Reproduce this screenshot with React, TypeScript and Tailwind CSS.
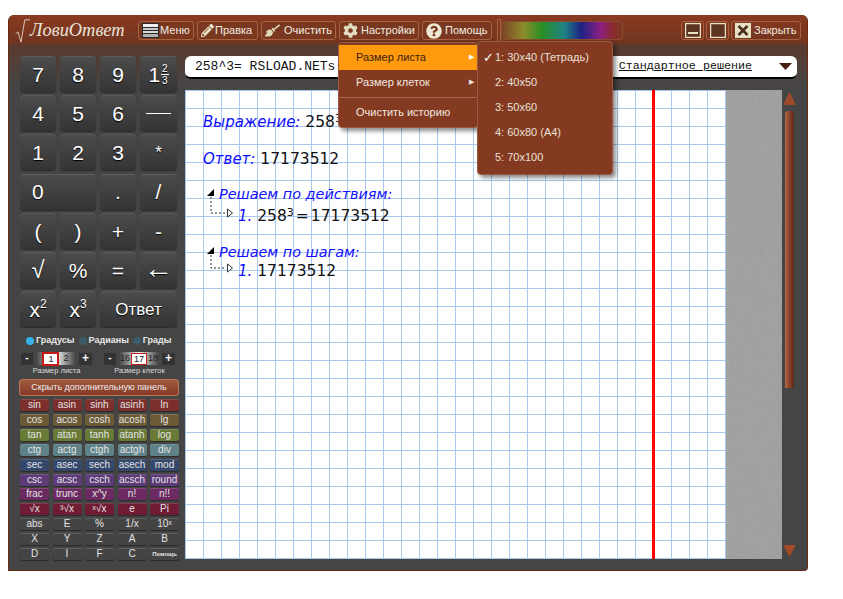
import { FaBroom, FaCog, FaPencilAlt, FaQuestionCircle } from "react-icons/fa";
import type { ReactNode } from "react";

const sans = "font-['Liberation_Sans',Arial,sans-serif]";

function ToolButton({ icon, label, width, iconWidth }: { icon: ReactNode; label: string; width: string; iconWidth: string }) {
  return (
    <div className={`${width} h-[19px] flex items-center pl-[3px] border border-[#a8623f] rounded-[3px] bg-[#7a3820] text-[11px] text-[#f0ebe0]`}>
      <span className={`${iconWidth} h-[16px] flex items-center justify-start shrink-0`}>{icon}</span>
      <span>{label}</span>
    </div>
  );
}

function MenuIcon() {
  return (
    <svg width="17" height="15" viewBox="0 0 17 15">
      <rect width="17" height="15" fill="#2a2a2a" />
      <rect x="1" y="1" width="15" height="3" fill="#f0f0f0" />
      <rect x="1" y="5" width="15" height="2" fill="#c8c8c8" />
      <rect x="1" y="8" width="15" height="2" fill="#d8d8d8" />
      <rect x="1" y="11" width="15" height="3" fill="#b0b0b0" />
    </svg>
  );
}

function WindowIcon({ kind }: { kind: "min" | "max" | "close" }) {
  return (
    <svg width="16" height="15" viewBox="0 0 16 15">
      <rect x="0.5" y="0.5" width="15" height="14" fill={kind === "close" ? "#e8e2c4" : "#5d3322"} stroke="#e8e2c4" strokeWidth="1.5" />
      {kind === "min" && <rect x="3" y="9" width="10" height="2" fill="#e8e2c4" />}
      {kind === "close" && <path d="M3.5 3 L12.5 12 M12.5 3 L3.5 12" stroke="#4a3022" strokeWidth="2.6" />}
    </svg>
  );
}

function Key({ children, className = "text-[21px]" }: { children: ReactNode; className?: string }) {
  return (
    <div className={`h-[36px] flex items-center justify-center rounded-[4px] border-t border-[#5c5c5c] bg-gradient-to-b from-[#4c4c4c] to-[#343434] shadow-[0_1px_1px_#2a2a2a] text-white [text-shadow:0_1px_1px_#000] ${className}`}>
      {children}
    </div>
  );
}

const funcRows: { color: string; keys: string[] }[] = [
  { color: "bg-[#7c2f2c]", keys: ["sin", "asin", "sinh", "asinh", "ln"] },
  { color: "bg-[#6a5a35]", keys: ["cos", "acos", "cosh", "acosh", "lg"] },
  { color: "bg-[#687a36]", keys: ["tan", "atan", "tanh", "atanh", "log"] },
  { color: "bg-[#5f8288]", keys: ["ctg", "actg", "ctgh", "actgh", "div"] },
  { color: "bg-[#34486c]", keys: ["sec", "asec", "sech", "asech", "mod"] },
  { color: "bg-[#5d3a78]", keys: ["csc", "acsc", "csch", "acsch", "round"] },
  { color: "bg-[#6c2a62]", keys: ["frac", "trunc", "x^y", "n!", "n!!"] },
  { color: "bg-[#6f1c34]", keys: ["√x", "³√x", "ˣ√x", "e", "Pi"] },
  { color: "bg-[#444444]", keys: ["abs", "E", "%", "1/x", "10ˣ"] },
  { color: "bg-[#444444]", keys: ["X", "Y", "Z", "A", "B"] },
  { color: "bg-[#444444]", keys: ["D", "I", "F", "C", "Помощь"] },
];

function Radio({ label, active }: { label: string; active?: boolean }) {
  return (
    <div className="flex items-center gap-[2px]">
      <span className={`w-[8px] h-[8px] rounded-full ${active ? "bg-[#35b4e8]" : "bg-[#3e5c68]"}`} />
      <span className="text-[9px] font-bold text-[#e8e8e8]">{label}</span>
    </div>
  );
}

function Stepper({ children, label }: { children: ReactNode; label: string }) {
  return (
    <div className="w-[71px] flex flex-col items-center">
      <div className="w-full flex items-center justify-between">
        <span className="w-[12px] h-[12px] bg-[#333] text-white text-[10px] font-bold leading-[10px] text-center">-</span>
        <div className="w-[40px] h-[13px] flex items-center justify-center bg-gradient-to-r from-[#444] via-[#f4f4f4] to-[#444] text-[9px] text-[#222]">
          {children}
        </div>
        <span className="w-[13px] h-[12px] bg-[#333] text-white text-[12px] font-bold leading-[11px] text-center">+</span>
      </div>
      <span className="mt-[1px] text-[7.5px] leading-[10px] text-[#ddd]">{label}</span>
    </div>
  );
}

function TreeMark({ height }: { height: number }) {
  return (
    <svg width="28" height={height} viewBox={`0 0 28 ${height}`} className="shrink-0 mt-[5px]">
      <path d="M0 7 L7 0 L7 7 Z" fill="#000" />
      <path d={`M4 8 V${height - 6} H19`} fill="none" stroke="#333" strokeDasharray="2 2" />
      <path d={`M20.5 ${height - 10} L25.5 ${height - 6} L20.5 ${height - 2} Z`} fill="#fff" stroke="#333" />
    </svg>
  );
}

export default function App() {
  return (
    <div className={`${sans} w-[843px] h-[599px] bg-white pt-[15px] pl-[8px]`}>
      <div className="relative w-[800px] h-[556px] flex flex-col rounded-tl-[6px] rounded-tr-[6px] rounded-br-[4px] bg-[#454545] border-l border-r border-b border-[#6a2a10] overflow-hidden">
        {/* title bar */}
        <div className="h-[30px] pt-[2px] shrink-0 flex items-center bg-gradient-to-b from-[#8a3a20] to-[#703420] border-b border-[#5c3a2c]">
          <div className="w-[129px] flex items-center pl-[6px] text-[#e8e4d8]">
            <svg width="15" height="26" viewBox="0 0 20 28" preserveAspectRatio="none" className="shrink-0">
              <path d="M1 17 L4 15 L8 26 L13 2 H20" fill="none" stroke="#e8e4d8" strokeWidth="1" />
            </svg>
            <span className="font-['Liberation_Serif',serif] italic text-[18.4px] leading-none">ЛовиОтвет</span>
          </div>
          <div className="flex gap-[3px]">
            <ToolButton width="w-[56px]" iconWidth="w-[18px]" label="Меню" icon={<MenuIcon />} />
            <ToolButton width="w-[61px]" iconWidth="w-[14px]" label="Правка" icon={<FaPencilAlt size={13} color="#e8e2c4" />} />
            <ToolButton width="w-[75px]" iconWidth="w-[19px]" label="Очистить" icon={<FaBroom size={15} color="#e0dcb8" />} />
            <ToolButton width="w-[80px]" iconWidth="w-[18px]" label="Настройки" icon={<FaCog size={15} color="#e0dcc0" />} />
            <ToolButton width="w-[70px]" iconWidth="w-[19px]" label="Помощь" icon={<FaQuestionCircle size={16} color="#ece8d4" />} />
          </div>
          <div className="ml-[5px] w-[4px] h-[24px] border border-[#a8623f]" />
          <div className="w-[122px] h-[19px] rounded-[3px] border border-[#8a4a2c] bg-[linear-gradient(to_right,#7c4424,#8c8c2c_18%,#2a8f24_33%,#1f8284_52%,#1e2284_66%,#8c2084_82%,#8a2a2a_93%,#7c3a22)]" />
          <div className="ml-auto mr-[6px] flex gap-[2px] text-[11px] text-[#f0ebe0]">
            <div className="w-[23px] h-[19px] flex items-center justify-center border border-[#a8623f] rounded-[3px]"><WindowIcon kind="min" /></div>
            <div className="w-[23px] h-[19px] flex items-center justify-center border border-[#a8623f] rounded-[3px]"><WindowIcon kind="max" /></div>
            <div className="w-[70px] h-[19px] flex items-center gap-[3px] pl-[3px] border border-[#a8623f] rounded-[3px]"><WindowIcon kind="close" />Закрыть</div>
          </div>
        </div>

        {/* body */}
        <div className="flex-1 flex bg-gradient-to-b from-[#5a3a2e] to-[#454545] to-[8%]">
          {/* left panel */}
          <div className="w-[160px] ml-[10px] shrink-0 flex flex-col pt-[11px]">
            <div className="grid grid-cols-[36px_36px_36px_37px] gap-x-[4px] gap-y-[3.2px] ml-[1px]">
              <Key>7</Key>
              <Key>8</Key>
              <Key>9</Key>
              <Key>
                <span>1</span>
                <span className="ml-[1px] flex flex-col items-center text-[10px] leading-[11px]">
                  <span className="border-b border-white px-[1px]">2</span>
                  <span>3</span>
                </span>
              </Key>
              <Key>4</Key>
              <Key>5</Key>
              <Key>6</Key>
              <Key>
                <span className="block w-[25px] h-[1px] bg-white" />
              </Key>
              <Key>1</Key>
              <Key>2</Key>
              <Key>3</Key>
              <Key className="text-[17px]">*</Key>
              <Key className="col-span-2 !justify-start pl-[12px] text-[21px]">0</Key>
              <Key>.</Key>
              <Key>/</Key>
              <Key>(</Key>
              <Key>)</Key>
              <Key>+</Key>
              <Key>-</Key>
              <Key className="text-[24px]">√</Key>
              <Key>%</Key>
              <Key>=</Key>
              <Key className="text-[29px] pb-[4px]">←</Key>
              <Key>
                x<sup className="text-[12px]">2</sup>
              </Key>
              <Key>
                x<sup className="text-[12px]">3</sup>
              </Key>
              <Key className="col-span-2 text-[17px]">Ответ</Key>
            </div>

            <div className="mt-[8px] h-[11px] flex items-center gap-[4px] ml-[7px]">
              <Radio label="Градусы" active />
              <Radio label="Радианы" />
              <Radio label="Грады" />
            </div>

            <div className="mt-[6px] flex gap-[12px] pl-[2px]">
              <Stepper label="Размер листа">
                <span className="w-[15px] h-[12px] leading-[10px] text-center border border-[#c81818] bg-white outline outline-[#c81818]">1</span>
                <span className="ml-[5px]">2</span>
              </Stepper>
              <Stepper label="Размер клеток">
                <span>16</span>
                <span className="mx-[1px] w-[16px] h-[12px] leading-[10px] text-center border border-[#c81818] bg-white">17</span>
                <span>18</span>
              </Stepper>
            </div>

            <div className="mt-[3px] w-[160px] h-[17px] flex items-center justify-center rounded-[3px] border border-[#b87a5c] bg-gradient-to-b from-[#a25a40] to-[#843a26] text-[9px] text-[#eee]">
              Скрыть дополнительную панель
            </div>

            <div className="mt-[3px] ml-[1px] grid grid-cols-[29px_29px_29px_29px_29px] gap-x-[3.5px] gap-y-[2.9px]">
              {funcRows.map((row) =>
                row.keys.map((k) => (
                  <div
                    key={k}
                    className={`${row.color} h-[12px] rounded-[2px] flex items-center justify-center shadow-[inset_0_1px_0_rgba(255,255,255,0.15),0_1px_1px_#2a2a2a] ${k === "Помощь" ? "text-[6px] font-bold" : "text-[10px]"} leading-none text-[#e4e4e4]`}
                  >
                    {k}
                  </div>
                )),
              )}
            </div>
          </div>

          {/* right column */}
          <div className="ml-[6px] flex-1 min-w-0 flex flex-col pt-[11px]">
            <div className="w-[612px] h-[23px] flex items-center justify-between pl-[10px] pr-[5px] rounded-[6px] bg-white border-b-2 border-black">
              <span className="font-['Liberation_Mono',monospace] text-[13px] text-[#111] whitespace-pre">258^3= RSLOAD.NETs</span>
              <div className="flex items-center gap-[27px]">
                <span className="font-['Liberation_Mono',monospace] text-[11.7px] text-[#111] underline">Стандартное решение</span>
                <svg width="13" height="7" viewBox="0 0 13 7">
                  <path d="M0 0 H13 L6.5 7 Z" fill="#4a1f10" />
                </svg>
              </div>
            </div>

            <div className="mt-[11px] flex-1 flex">
              {/* paper */}
              <div className="relative w-[541px] h-[469px] pl-[18px] pt-[22px] bg-white bg-[linear-gradient(#a8c8f0_1px,transparent_1px),linear-gradient(90deg,#a8c8f0_1px,transparent_1px)] bg-[length:18px_18px] bg-[position:0_0,0_0] font-['DejaVu_Sans',sans-serif] text-[15.5px] leading-[20px] text-[#111]">
                <div className="absolute top-0 bottom-0 left-[467px] w-[3px] bg-[#ff0000]" />
                <div>
                  <i className="text-[#1010ff] text-[15px]">Выражение:</i> 258<sup className="text-[11px]">3</sup>
                </div>
                <div className="mt-[17px]">
                  <i className="text-[#1010ff] text-[15px]">Ответ:</i> 17173512
                </div>
                <div className="mt-[15px] ml-[4px] flex">
                  <TreeMark height={30} />
                  <div className="-ml-[16px]">
                    <div className="h-[22px]">
                      <i className="text-[#1010ff] text-[14.4px]">Решаем по действиям:</i>
                    </div>
                    <div className="ml-[19px]">
                      <i className="text-[#1010ff] text-[15px]">1.</i> 258<sup className="text-[11px]">3</sup><span className="mx-[2px]">=</span>17173512
                    </div>
                  </div>
                </div>
                <div className="mt-[16px] ml-[4px] flex">
                  <TreeMark height={27} />
                  <div className="-ml-[16px]">
                    <div className="h-[19px]">
                      <i className="text-[#1010ff] text-[14.4px]">Решаем по шагам:</i>
                    </div>
                    <div className="ml-[19px]">
                      <i className="text-[#1010ff] text-[15px]">1.</i> 17173512
                    </div>
                  </div>
                </div>
              </div>
              {/* grey margin */}
              <div className="relative w-[56px] h-[469px] bg-[#9c9c9c] overflow-hidden">
                <svg width="56" height="469" className="absolute inset-0 opacity-30">
                  <filter id="grain">
                    <feTurbulence type="fractalNoise" baseFrequency="0.9" numOctaves="2" />
                    <feColorMatrix type="saturate" values="0" />
                  </filter>
                  <rect width="56" height="469" filter="url(#grain)" />
                </svg>
              </div>
              {/* scrollbar */}
              <div className="ml-[1px] w-[13px] flex flex-col items-center">
                <svg width="13" height="13" viewBox="0 0 13 13" className="mt-[2px]">
                  <path d="M6.5 0 L13 13 H0 Z" fill="#a04a2c" />
                </svg>
                <div className="mt-[6px] w-[9px] h-[277px] rounded-t-[3px] bg-gradient-to-r from-[#b06a4c] via-[#8a4228] to-[#5a2a18]" />
                <svg width="13" height="12" viewBox="0 0 13 12" className="mt-[157px]">
                  <path d="M0 0 H13 L6.5 12 Z" fill="#a04a2c" />
                </svg>
              </div>
            </div>
          </div>
        </div>

        {/* settings menu */}
        <div className="absolute left-[329px] top-[27px] w-[140px] h-[86px] pt-[2px] rounded-[4px] bg-[#843a20] border border-[#9a5a42] shadow-[3px_3px_4px_rgba(0,0,0,0.45)] text-[11px] text-[#f0e8e0]">
          <div className="h-[25px] flex items-center justify-between pl-[17px] pr-[3px] bg-[#ff9a0d] text-[#3a2010]">
            Размер листа
            <span className="text-[7px] text-white">▶</span>
          </div>
          <div className="h-[25px] flex items-center justify-between pl-[17px] pr-[3px]">
            Размер клеток
            <span className="text-[7px]">▶</span>
          </div>
          <div className="h-[1px] mt-[2px] bg-[#a0664e]" />
          <div className="h-[28px] flex items-center pl-[17px]">Очистить историю</div>
        </div>

        {/* sheet size submenu */}
        <div className="absolute left-[468px] top-[26px] w-[136px] h-[134px] pt-[3px] rounded-[4px] bg-[#843a20] border border-[#9a5a42] shadow-[3px_3px_4px_rgba(0,0,0,0.45)] text-[11px] text-[#e8e0d8]">
          {["1: 30x40 (Тетрадь)", "2: 40x50", "3: 50x60", "4: 60x80 (А4)", "5: 70x100"].map((s, i) => (
            <div key={s} className="relative h-[25px] flex items-center pl-[17px]">
              {i === 0 && <span className="absolute left-[5px] text-[13px] text-white">✓</span>}
              {s}
            </div>
          ))}
        </div>
      </div>
    </div>
  );
}
